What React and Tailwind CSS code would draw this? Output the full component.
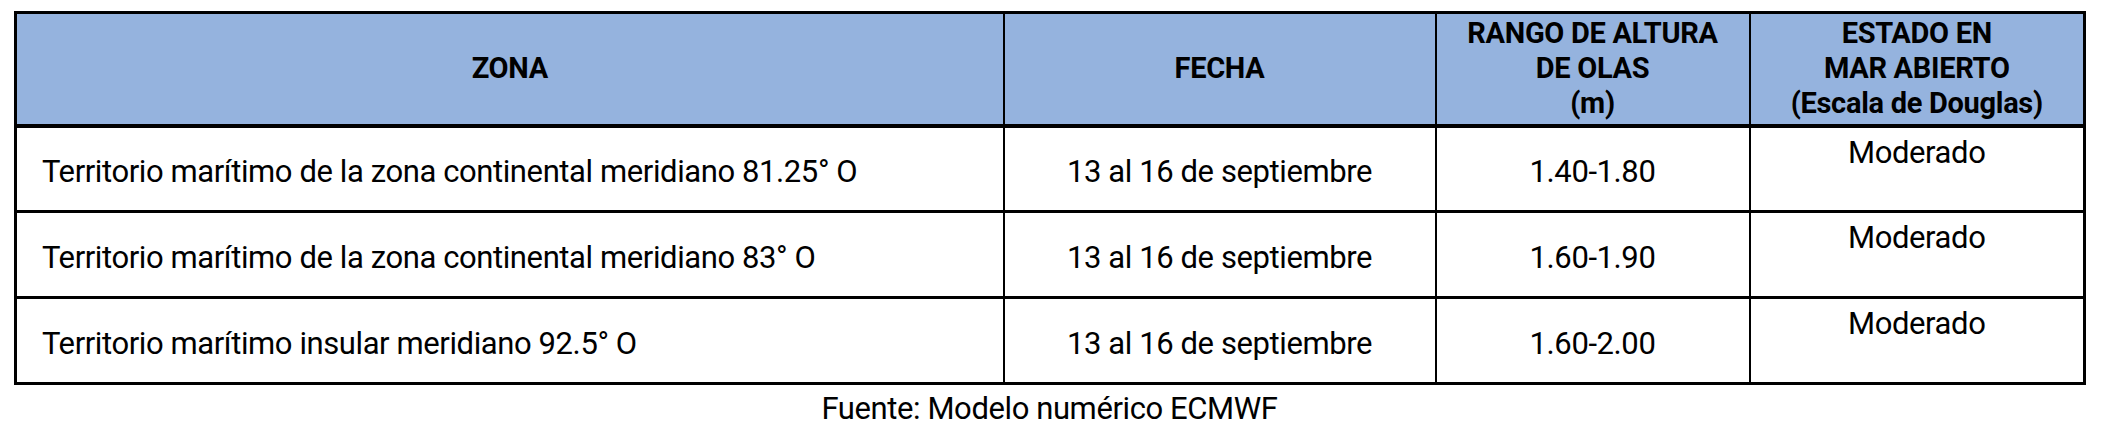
import React from "react";

const rows = [
  {
    zona: "Territorio marítimo de la zona continental meridiano 81.25° O",
    fecha: "13 al 16 de septiembre",
    rango: "1.40-1.80",
    estado: "Moderado",
  },
  {
    zona: "Territorio marítimo de la zona continental meridiano 83° O",
    fecha: "13 al 16 de septiembre",
    rango: "1.60-1.90",
    estado: "Moderado",
  },
  {
    zona: "Territorio marítimo insular meridiano 92.5° O",
    fecha: "13 al 16 de septiembre",
    rango: "1.60-2.00",
    estado: "Moderado",
  },
];

export default function App() {
  return (
    <div
      className="w-[2102px] h-[426px] bg-white text-black pl-[14px] pt-[11px]"
      style={{ fontFamily: "Roboto, 'Noto Sans', sans-serif" }}
    >
      <table className="w-[2071px] table-fixed border-collapse border-[3px] border-black">
        <colgroup>
          <col className="w-[988px]" />
          <col className="w-[432px]" />
          <col className="w-[314px]" />
          <col className="w-[335px]" />
        </colgroup>
        <thead>
          <tr className="h-[113px] bg-[#95b3de] border-b-[4px] border-black">
            <th className="border-r-[2px] border-black text-[29px] font-bold leading-[35px] tracking-[-0.3px] align-middle">ZONA</th>
            <th className="border-r-[2px] border-black text-[29px] font-bold leading-[35px] tracking-[-0.3px] align-middle">FECHA</th>
            <th className="border-r-[2px] border-black text-[29px] font-bold leading-[35px] tracking-[-0.3px] align-middle">
              RANGO DE ALTURA
              <br />
              DE OLAS
              <br />
              (m)
            </th>
            <th className="text-[29px] font-bold leading-[35px] tracking-[-0.3px] align-middle">
              ESTADO EN
              <br />
              MAR ABIERTO
              <br />
              (Escala de Douglas)
            </th>
          </tr>
        </thead>
        <tbody>
          {rows.map((r, i) => (
            <tr key={i} className="h-[86px] border-b-[3px] border-black text-[31px] tracking-[-0.4px]">
              <td className="border-r-[2px] border-black pl-[25px] pt-[7px] align-middle">{r.zona}</td>
              <td className="border-r-[2px] border-black text-center pt-[7px] align-middle">{r.fecha}</td>
              <td className="border-r-[2px] border-black text-center pt-[7px] align-middle">{r.rango}</td>
              <td className="text-center align-top pt-[2px]">{r.estado}</td>
            </tr>
          ))}
        </tbody>
      </table>
      <div className="w-[2071px] text-center text-[31px] tracking-[-0.4px] mt-[1px]">Fuente: Modelo numérico ECMWF</div>
    </div>
  );
}
